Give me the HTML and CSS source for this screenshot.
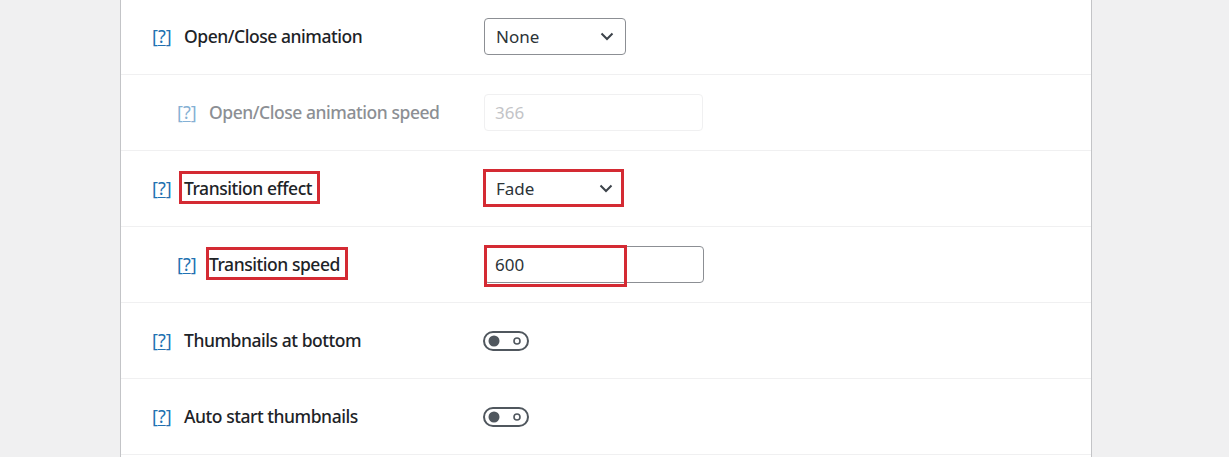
FILE: index.html
```html
<!DOCTYPE html>
<html lang="en">
<head>
<meta charset="utf-8">
<title>Lightbox settings</title>
<link rel="stylesheet" href="styles.css">
</head>
<body>
<div class="page">
  <div class="panel">
    <div class="rows">
      <div class="row">
        <div class="label-cell">
          <a class="help">[<span class="q">?</span>]</a>
          <span class="label">Open/Close animation</span>
        </div>
        <div class="control-cell">
          <div class="select">
            <span>None</span>
            <svg class="chev" viewBox="0 0 14 9" width="14" height="9"><path d="M1.5 1.5 L7 7 L12.5 1.5" fill="none" stroke="#3c434a" stroke-width="2"/></svg>
          </div>
        </div>
      </div>

      <div class="row sub disabled">
        <div class="label-cell">
          <a class="help">[<span class="q">?</span>]</a>
          <span class="label">Open/Close animation speed</span>
        </div>
        <div class="control-cell">
          <div class="input input-disabled">366</div>
        </div>
      </div>

      <div class="row">
        <div class="label-cell">
          <a class="help">[<span class="q">?</span>]</a>
          <span class="label mark mark-label">Transition effect</span>
        </div>
        <div class="control-cell">
          <div class="select select-fade mark mark-select">
            <span>Fade</span>
            <svg class="chev" viewBox="0 0 14 9" width="14" height="9"><path d="M1.5 1.5 L7 7 L12.5 1.5" fill="none" stroke="#3c434a" stroke-width="2"/></svg>
          </div>
        </div>
      </div>

      <div class="row sub">
        <div class="label-cell">
          <a class="help">[<span class="q">?</span>]</a>
          <span class="label mark mark-label2">Transition speed</span>
        </div>
        <div class="control-cell">
          <div class="input-wrap">
            <div class="input">600</div>
            <span class="mark-box"></span>
          </div>
        </div>
      </div>

      <div class="row">
        <div class="label-cell">
          <a class="help">[<span class="q">?</span>]</a>
          <span class="label">Thumbnails at bottom</span>
        </div>
        <div class="control-cell">
          <svg class="toggle" viewBox="0 0 46 20" width="46" height="20">
            <rect x="1" y="1" width="44" height="18" rx="9" fill="none" stroke="#50575e" stroke-width="2"/>
            <circle cx="11" cy="10" r="5.5" fill="#50575e"/>
            <circle cx="34" cy="10" r="3" fill="none" stroke="#50575e" stroke-width="1.6"/>
          </svg>
        </div>
      </div>

      <div class="row">
        <div class="label-cell">
          <a class="help">[<span class="q">?</span>]</a>
          <span class="label">Auto start thumbnails</span>
        </div>
        <div class="control-cell">
          <svg class="toggle" viewBox="0 0 46 20" width="46" height="20">
            <rect x="1" y="1" width="44" height="18" rx="9" fill="none" stroke="#50575e" stroke-width="2"/>
            <circle cx="11" cy="10" r="5.5" fill="#50575e"/>
            <circle cx="34" cy="10" r="3" fill="none" stroke="#50575e" stroke-width="1.6"/>
          </svg>
        </div>
      </div>

      <div class="row"></div>
    </div>
  </div>
</div>
</body>
</html>
```

FILE: styles.css
```css
html, body {
  margin: 0;
  padding: 0;
}

body {
  background: #f0f0f1;
  font-family: "Noto Sans", "Open Sans", sans-serif;
  color: #1d2327;
  height: 457px;
  overflow: hidden;
}

.page {
  padding-left: 120px;
}

.panel {
  width: 970px;
  background: #fff;
  border-left: 1px solid #c3c4c7;
  border-right: 1px solid #c3c4c7;
  height: 457px;
  overflow: hidden;
}

.rows {
  margin-top: -1px;
}

.row {
  display: grid;
  grid-template-columns: 363px 1fr;
  align-items: center;
  height: 75px;
  border-bottom: 1px solid #f0f0f1;
}

.label-cell {
  display: flex;
  align-items: center;
  padding-left: 31px;
  padding-bottom: 2px;
}

.row.sub .label-cell {
  padding-left: 56px;
}

.help {
  display: inline-block;
  width: 32px;
  color: #2271b1;
  font-size: 18px;
  font-weight: 400;
  line-height: 24px;
}

.help .q {
  text-decoration: underline;
  text-decoration-thickness: 1px;
  text-underline-offset: 2px;
}

.label {
  font-size: 17.5px;
  font-weight: 500;
  line-height: 24px;
  letter-spacing: -0.45px;
}

.control-cell {
  display: flex;
  align-items: center;
}

.select {
  box-sizing: border-box;
  width: 142px;
  height: 37px;
  border: 1px solid #8c8f94;
  border-radius: 4px;
  display: flex;
  align-items: center;
  justify-content: space-between;
  padding: 0 11px 0 11px;
  font-size: 17px;
  color: #2c3338;
}

.select-fade {
  width: 139px;
  padding-right: 9px;
}

.chev {
  display: block;
}

.input {
  box-sizing: border-box;
  width: 220px;
  height: 37px;
  border: 1px solid #8c8f94;
  border-radius: 4px;
  display: flex;
  align-items: center;
  padding-left: 10px;
  font-size: 17px;
  color: #2c3338;
}

.input-disabled {
  width: 219px;
  border-color: #f0f0f1;
  color: #c3c4c7;
}

.disabled .help {
  opacity: 0.55;
}

.disabled .label {
  color: #8c8f94;
}

.input-wrap {
  position: relative;
}

/* red annotation boxes drawn over the content */
.mark {
  position: relative;
}

.mark::after {
  content: "";
  position: absolute;
  border: 3px solid #d42a33;
  pointer-events: none;
}

.mark-label::after {
  left: -5px;
  right: -8px;
  top: -5px;
  bottom: -4px;
}

.mark-label2::after {
  left: -3px;
  right: -8px;
  top: -5px;
  bottom: -4px;
}

.mark-select::after {
  left: -2px;
  right: -2px;
  top: -2px;
  bottom: -1px;
}

.mark-box {
  position: absolute;
  left: 0;
  top: -1px;
  width: 143px;
  height: 42px;
  box-sizing: border-box;
  border: 3px solid #d42a33;
}

.toggle {
  display: block;
  margin-left: -1px;
}
```
